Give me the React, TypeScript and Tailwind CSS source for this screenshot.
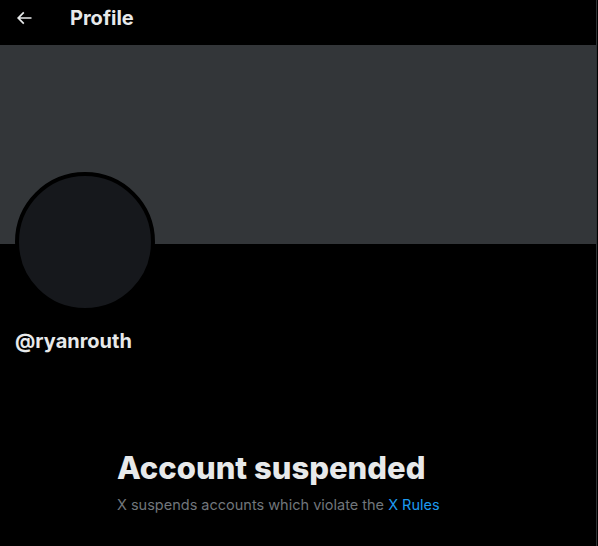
import React from "react";

export default function App() {
  const font = { fontFamily: "Inter, 'Noto Sans', 'Liberation Sans', sans-serif" };
  return (
    <div className="w-[598px] h-[546px] bg-black overflow-hidden" style={font}>
      <div className="w-[597px] h-full border-r border-[#2f3336]">
        <div className="h-[45px] flex items-start pt-[6px] pl-[14px] pr-4">
          <div className="h-6 flex items-center">
            <svg viewBox="0 0 24 24" className="w-[20px] h-[20px] text-[#e7e9ea]" fill="currentColor">
              <path d="M7.414 13l5.043 5.04-1.414 1.42L3.586 12l7.457-7.46 1.414 1.42L7.414 11H21v2H7.414z" />
            </svg>
          </div>
          <div className="ml-[36px] text-[20px] font-bold text-[#e7e9ea] leading-6">Profile</div>
        </div>
        <div className="h-[199px] bg-[#333639]" />
        <div className="relative px-[15px]">
          <div className="-mt-[72px] w-[140px] h-[140px] rounded-full border-4 border-black bg-[#16181c]" />
          <div className="mt-[17px] text-[20px] font-bold text-[#e7e9ea] leading-6">@ryanrouth</div>
        </div>
        <div className="mt-[97px] pl-[117px]">
          <div className="text-[31px] font-extrabold text-[#e7e9ea] leading-9">Account suspended</div>
          <div className="mt-[9px] text-[14.5px] text-[#71767b] leading-5">
            X suspends accounts which violate the <span className="text-[#1d9bf0]">X Rules</span>
          </div>
        </div>
      </div>
    </div>
  );
}
